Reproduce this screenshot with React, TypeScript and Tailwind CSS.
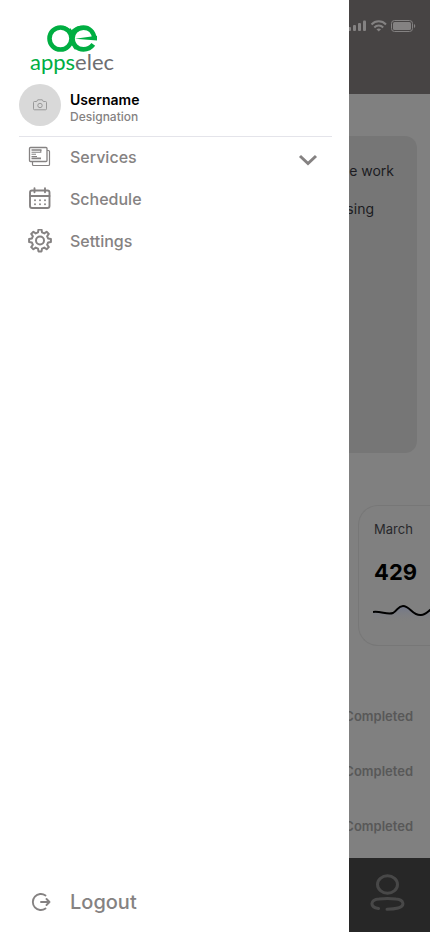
import type { ReactNode } from "react";

function Logo() {
  return (
    <div className="ml-[28px] flex w-[88px] flex-col items-center">
      <svg className="h-[27px] w-[50px]" viewBox="0 0 50 27" fill="none" stroke="#00ae42" strokeWidth="4.6">
        <circle cx="13.500" cy="13.500" r="11" />
        <path d="M47.300 13C46.500 6.500 42 2.600 36.500 2.600 30 2.600 25.500 7.500 25.500 13.500S30 24.400 36.500 24.400c4 0 7.400-1.700 9.800-5" />
        <path d="M22 4.500c3.500 4.500 2.500 13.500 7.500 19" strokeWidth="4" />
        <path d="M17 2.600c3.500 1 5 2.200 7.500 4.800 2.500-2.600 4.500-4.200 8-4.800" strokeWidth="3" />
        <path d="M28 13.800 50 10.800v4.600Z" fill="#00ae42" stroke="none" />
      </svg>
      <span className="-mt-px font-[Lato,sans-serif] text-[22px] leading-[22px] text-[#6d6e71]">
        <span className="text-[#00ae42]">apps</span>elec
      </span>
    </div>
  );
}

function CameraIcon() {
  return (
    <svg className="h-[12px] w-[14px]" viewBox="0 0 14 12" fill="none" stroke="#999" strokeWidth="1">
      <path d="M1.500 2.500h2.200l1-1.700h4.600l1 1.700h2.200a1 1 0 0 1 1 1v6.300a1 1 0 0 1-1 1h-11a1 1 0 0 1-1-1V3.500a1 1 0 0 1 1-1Z" />
      <circle cx="7" cy="6.500" r="2.200" />
    </svg>
  );
}

function ServicesIcon() {
  return (
    <svg className="h-[24px] w-[24px]" viewBox="0 0 24 24" fill="none" stroke="#858282">
      <rect x="1.500" y="2.500" width="17.500" height="14" rx="1" strokeWidth="1.300" />
      <path d="M4.500 17v2.500a1 1 0 0 0 1 1h15a1 1 0 0 0 1-1V6.500a1 1 0 0 0-1-1H19" strokeWidth="1.200" />
      <path d="M3.500 5h10M3.500 13.300h9.500" strokeWidth="1.700" />
      <path d="M12.800 5v2.200H3.500M3.500 9.200h4.500M3.500 11.500h5.500" strokeWidth="1.100" />
    </svg>
  );
}

function ScheduleIcon() {
  return (
    <svg className="h-[24px] w-[24px]" viewBox="0 0 24 24" fill="none" stroke="#858282" strokeWidth="1.900" strokeLinecap="round">
      <rect x="2" y="3.500" width="19.500" height="17.500" rx="2" />
      <path d="M2 9h19.500M6.500 1.200v4M17 1.200v4" />
      <path d="M7 13.200h.01M12 13.200h.01M17 13.200h.01M7 17.200h.01M12 17.200h.01M17 17.200h.01" />
    </svg>
  );
}

function SettingsIcon() {
  const teeth = [0, 45, 90, 135, 180, 225, 270, 315];
  const points = teeth.flatMap((deg) =>
    [
      [-14, 8.3],
      [-8, 11],
      [8, 11],
      [14, 8.3],
    ].map(([offset, radius]) => {
      const angle = ((deg + offset) * Math.PI) / 180;
      return `${12 + radius * Math.sin(angle)},${11.5 - radius * Math.cos(angle)}`;
    }),
  );
  return (
    <svg className="h-[24px] w-[24px]" viewBox="0 0 24 24" fill="none" stroke="#858282" strokeWidth="2" strokeLinejoin="round">
      <polygon points={points.join(" ")} />
      <circle cx="12" cy="11.500" r="4" />
    </svg>
  );
}

function LogoutIcon() {
  return (
    <svg className="h-[20px] w-[20px]" viewBox="0 0 20 20" fill="none" stroke="#858282" strokeWidth="1.900" strokeLinecap="round" strokeLinejoin="round">
      <path d="M14.500 3.500A8 8 0 1 0 14.500 16.500M10 10h8.500M15.500 7l3 3-3 3" />
    </svg>
  );
}

function MenuItem({ icon, label, end }: { icon: ReactNode; label: string; end?: ReactNode }) {
  return (
    <li>
      <button type="button" className="flex h-[42px] w-full items-center pl-[9px] text-left">
        {icon}
        <span className="ml-[18px] flex-1 text-base font-medium">{label}</span>
        {end}
      </button>
    </li>
  );
}

function Drawer() {
  return (
    <aside className="flex w-[349px] shrink-0 flex-col bg-white pt-[25px] text-[#858282]">
      <Logo />
      <div className="mt-[11px] mr-[17px] ml-[19px] flex h-[53px] border-b border-[#e4e4ea]">
        <div className="flex size-[42px] items-center justify-center rounded-full bg-[#d9d9d9]">
          <CameraIcon />
        </div>
        <div className="ml-[9px] pt-[7px]">
          <p className="text-sm leading-[18px] font-semibold text-black">Username</p>
          <p className="text-xs leading-4 font-medium">Designation</p>
        </div>
      </div>
      <nav className="flex flex-1 flex-col pr-[31px] pl-[19px]">
        <ul className="-mt-px">
          <MenuItem
            icon={<ServicesIcon />}
            label="Services"
            end={
              <svg className="mt-[6px] h-[12px] w-[20px]" viewBox="0 0 20 12" fill="none" stroke="#858282" strokeWidth="3">
                <path d="m2 2 8 7.500L18 2" />
              </svg>
            }
          />
          <MenuItem icon={<ScheduleIcon />} label="Schedule" />
          <MenuItem icon={<SettingsIcon />} label="Settings" />
        </ul>
        <button type="button" className="mt-auto mb-[15px] flex items-center gap-[19px] pl-[12px] text-xl leading-[30px] font-medium">
          <LogoutIcon />
          Logout
        </button>
      </nav>
    </aside>
  );
}

function StatusBar() {
  return (
    <header className="flex h-[94px] items-start justify-end bg-[#474444] pt-[19px] pr-[14px]">
      <svg className="h-[14px] w-[67px] shrink-0" viewBox="0 0 67 14" fill="#848282">
        <rect x="-1" y="8" width="3" height="4" rx="1" />
        <rect x="4" y="6" width="3" height="6" rx="1" />
        <rect x="9" y="4" width="3" height="8" rx="1" />
        <rect x="14" y="1.500" width="3" height="10.500" rx="1" />
        <g fill="none" stroke="#848282" strokeWidth="2">
          <path d="M22.500 5.500c4-4.200 10.500-4.200 14.500 0M25.300 8.500c2.500-2.600 6.400-2.600 8.900 0" />
        </g>
        <path d="m29.750 12.500-2.300-2.300c1.200-1.100 3.400-1.100 4.600 0Z" />
        <rect x="42.500" y="1.500" width="21" height="11" rx="3" fill="none" stroke="#848282" />
        <rect x="44" y="3" width="18" height="8" rx="1.500" />
        <path d="M65 5c1.700.6 1.700 3.400 0 4Z" />
      </svg>
    </header>
  );
}

function MonthCard() {
  return (
    <section className="mt-[52px] ml-[9px] h-[141px] overflow-hidden rounded-l-[20px] border border-r-0 border-[#777] pt-[14px]">
      <p className="ml-[15px] text-[13px] leading-[18px] text-[#28282c]">March</p>
      <p className="mt-5 ml-[15px] text-[22px] leading-[28px] font-bold text-black">429</p>
      <svg className="mt-4 ml-[14px] h-[30px] w-[70px]" viewBox="0 0 70 30" fill="none">
        <defs>
          <linearGradient id="fade" x1="0" y1="0" x2="0" y2="1">
            <stop offset="0" stopColor="#6c7490" stopOpacity=".7" />
            <stop offset="1" stopColor="#808080" stopOpacity="0" />
          </linearGradient>
        </defs>
        <path d="M0 10C8 9 14 13 20 11 25 8 25 4 30 4c7 0 10 10 18 9C53 13 55 9 60 6v14H0Z" fill="url(#fade)" />
        <path d="M0 10C8 9 14 13 20 11 25 8 25 4 30 4c7 0 10 10 18 9C53 13 55 9 60 6" stroke="#000" strokeWidth="2" />
      </svg>
    </section>
  );
}

function Page() {
  return (
    <main className="flex min-w-0 flex-1 flex-col overflow-hidden bg-[#808080]">
      <StatusBar />
      <section className="mt-[42px] mr-[13px] flex h-[317px] flex-col items-end overflow-hidden rounded-r-xl bg-[#767676] pt-[16px] text-sm leading-[38px] text-[#1c1c22]">
        <p className="mr-[23px] whitespace-nowrap">e work</p>
        <p className="mr-[43px] whitespace-nowrap">sing</p>
      </section>
      <MonthCard />
      <ul className="mt-[43px] text-[13px] font-semibold text-[#585858]">
        {[1, 2, 3].map((row) => (
          <li key={row} className="flex h-[55px] items-center justify-end pr-[17px]">
            Completed
          </li>
        ))}
      </ul>
      <footer className="mt-auto flex h-[74px] items-start justify-end bg-[#272727] pt-[16px] pr-[25px]">
        <button type="button" aria-label="Profile">
          <svg className="h-[38px] w-[35px]" viewBox="0 0 35 38" fill="none" stroke="#484848" strokeWidth="3" strokeLinecap="round">
            <ellipse cx="17.500" cy="10.500" rx="10" ry="8.700" />
            <path d="M8.500 34.500C-1 33 .5 25.500 9 25c5-.6 12-.6 17 0 8 .6 9.500 7 2 9-3 .9-7 1.200-11 1.200" />
          </svg>
        </button>
      </footer>
    </main>
  );
}

export default function App() {
  return (
    <div className="flex min-h-screen font-[Inter,sans-serif]">
      <Drawer />
      <Page />
    </div>
  );
}
